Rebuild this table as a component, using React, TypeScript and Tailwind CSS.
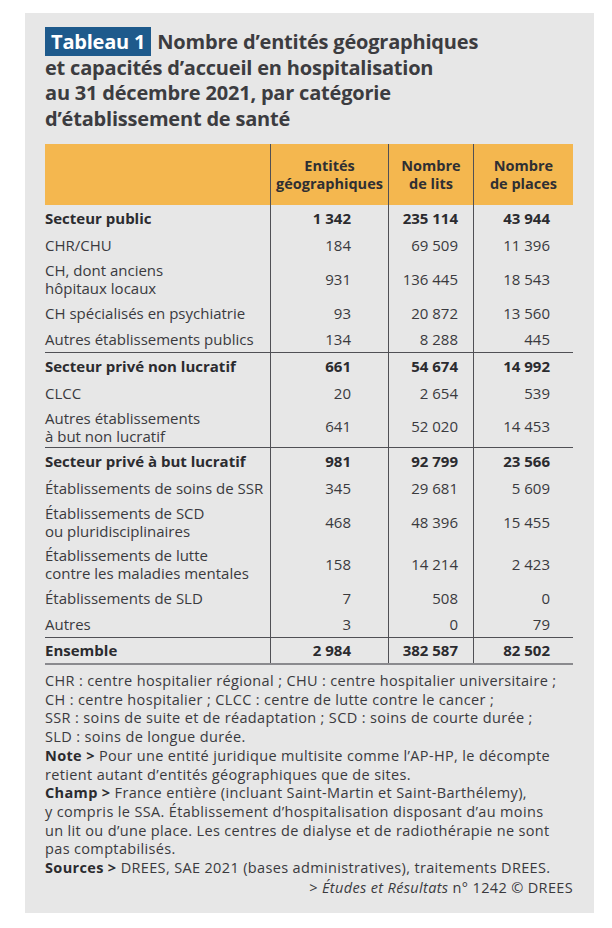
import React from "react";

type Row = {
  label: string[];
  vals: [string, string, string];
  bold?: boolean;
  sep?: boolean;
};

const S = "\u00a0";

const rows: Row[] = [
  { label: ["Secteur public"], vals: [`1${S}342`, `235${S}114`, `43${S}944`], bold: true },
  { label: ["CHR/CHU"], vals: ["184", `69${S}509`, `11${S}396`] },
  { label: ["CH, dont anciens", "hôpitaux locaux"], vals: ["931", `136${S}445`, `18${S}543`] },
  { label: ["CH spécialisés en psychiatrie"], vals: ["93", `20${S}872`, `13${S}560`] },
  { label: ["Autres établissements publics"], vals: ["134", `8${S}288`, "445"], sep: true },
  { label: ["Secteur privé non lucratif"], vals: ["661", `54${S}674`, `14${S}992`], bold: true },
  { label: ["CLCC"], vals: ["20", `2${S}654`, "539"] },
  { label: ["Autres établissements", "à but non lucratif"], vals: ["641", `52${S}020`, `14${S}453`], sep: true },
  { label: ["Secteur privé à but lucratif"], vals: ["981", `92${S}799`, `23${S}566`], bold: true },
  { label: ["Établissements de soins de SSR"], vals: ["345", `29${S}681`, `5${S}609`] },
  { label: ["Établissements de SCD", "ou pluridisciplinaires"], vals: ["468", `48${S}396`, `15${S}455`] },
  { label: ["Établissements de lutte", "contre les maladies mentales"], vals: ["158", `14${S}214`, `2${S}423`] },
  { label: ["Établissements de SLD"], vals: ["7", "508", "0"] },
  { label: ["Autres"], vals: ["3", "0", "79"], sep: true },
];

const grid = "grid grid-cols-[225px_118px_85px_100px]";

function DataRow({ r }: { r: Row }) {
  const h = r.label.length > 1 ? "h-[42px]" : "h-[26.5px]";
  const weight = r.bold ? "font-bold text-[#2b2b2f]" : "font-normal text-[#3a3a3e]";
  return (
    <div className={`${grid} ${h} ${r.sep ? "border-b border-[#505055]" : ""} ${weight}`}>
      <div className="flex flex-col justify-center leading-[18px] whitespace-nowrap">
        {r.label.map((l, i) => (
          <span key={i}>{l}</span>
        ))}
      </div>
      <div className="flex items-center justify-end border-l border-[#505055] pr-[37px]">{r.vals[0]}</div>
      <div className="flex items-center justify-end border-l border-[#505055] pr-[15px]">{r.vals[1]}</div>
      <div className="flex items-center justify-end border-l border-[#505055] pr-[23px]">{r.vals[2]}</div>
    </div>
  );
}

export default function App() {
  return (
    <div className="w-[612px] h-[928px] bg-white overflow-hidden" style={{ fontFamily: "'Open Sans', 'Noto Sans', sans-serif" }}>
      <div className="ml-[25px] mt-[13px] w-[569px] h-[900px] bg-[#e7e7e7] pl-[20px] pr-[21px] pt-[16px]">
        <h1 className="text-[20px] leading-[25.5px] font-bold tracking-[-0.2px] text-[#3c3c40] w-[460px] whitespace-nowrap">
          <span className="bg-[#1e5a8c] text-white px-[6px] py-[1px] mr-[6px]">Tableau 1</span>
          Nombre d’entités géographiques
          <br />
          et capacités d’accueil en hospitalisation
          <br />
          au 31 décembre 2021, par catégorie
          <br />
          d’établissement de santé
        </h1>

        <div className="mt-[13px] w-[528px] text-[15px]">
          <div className={`${grid} h-[61px] bg-[#f4b74f] font-bold text-[#2f2f33] leading-[18px] text-[14.5px]`}>
            <div />
            <div className="flex items-center justify-center text-center border-l border-[#505055]">
              Entités
              <br />
              géographiques
            </div>
            <div className="flex items-center justify-center text-center border-l border-[#505055]">
              Nombre
              <br />
              de lits
            </div>
            <div className="flex items-center justify-center text-center border-l border-[#505055]">
              Nombre
              <br />
              de places
            </div>
          </div>
          {rows.map((r, i) => (
            <DataRow key={i} r={r} />
          ))}
          <div className={`${grid} h-[27px] border-b-2 border-[#8a8a8e] font-bold text-[#2b2b2f]`}>
            <div className="flex items-center">Ensemble</div>
            <div className="flex items-center justify-end border-l border-[#505055] pr-[37px]">{`2${S}984`}</div>
            <div className="flex items-center justify-end border-l border-[#505055] pr-[15px]">{`382${S}587`}</div>
            <div className="flex items-center justify-end border-l border-[#505055] pr-[23px]">{`82${S}502`}</div>
          </div>
        </div>

        <div className="mt-[7px] text-[14.5px] leading-[18.7px] tracking-[0.35px] text-[#3a3a3e] whitespace-nowrap">
          <p>CHR : centre hospitalier régional ; CHU : centre hospitalier universitaire ;</p>
          <p>CH : centre hospitalier ; CLCC : centre de lutte contre le cancer ;</p>
          <p>SSR : soins de suite et de réadaptation ; SCD : soins de courte durée ;</p>
          <p>SLD : soins de longue durée.</p>
          <p>
            <span className="font-bold text-[#2b2b2f]">Note &gt;</span> Pour une entité juridique multisite comme l’AP-HP, le décompte
            <br />
            retient autant d’entités géographiques que de sites.
          </p>
          <p>
            <span className="font-bold text-[#2b2b2f]">Champ &gt;</span> France entière (incluant Saint-Martin et Saint-Barthélemy),
            <br />
            y compris le SSA. Établissement d’hospitalisation disposant d’au moins
            <br />
            un lit ou d’une place. Les centres de dialyse et de radiothérapie ne sont
            <br />
            pas comptabilisés.
          </p>
          <p>
            <span className="font-bold text-[#2b2b2f]">Sources &gt;</span> DREES, SAE 2021 (bases administratives), traitements DREES.
          </p>
          <p className="mt-[1px] w-[528px] text-right">
            &gt; <span className="italic">Études et Résultats</span> n° 1242 © DREES
          </p>
        </div>
      </div>
    </div>
  );
}
